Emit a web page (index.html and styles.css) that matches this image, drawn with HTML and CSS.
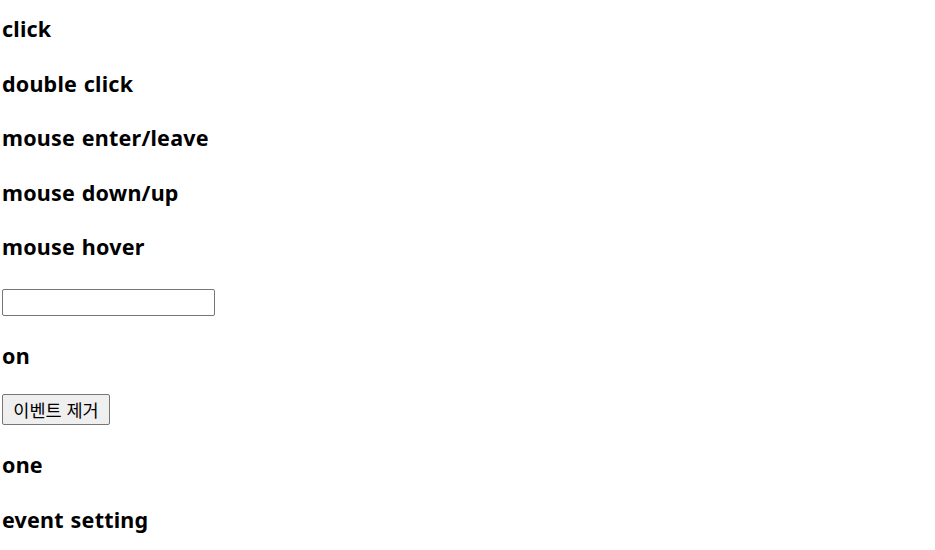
FILE: index.html
```html
<!DOCTYPE html>
<html lang="ko">
<head>
<meta charset="utf-8">
<title>events</title>
<link rel="stylesheet" href="styles.css">
</head>
<body>
<div class="stack">
  <div class="row"><h3 class="label">click</h3></div>
  <div class="row"><h3 class="label">double click</h3></div>
  <div class="row"><h3 class="label">mouse enter/leave</h3></div>
  <div class="row"><h3 class="label">mouse down/up</h3></div>
  <div class="row"><h3 class="label">mouse hover</h3></div>
  <div class="row"><input class="field" type="text"></div>
  <div class="row"><h3 class="label">on</h3></div>
  <div class="row"><button class="btn" type="button">이벤트 제거</button></div>
  <div class="row"><h3 class="label">one</h3></div>
  <div class="row"><h3 class="label">event setting</h3></div>
</div>
</body>
</html>
```
FILE: styles.css
```css
html, body {
  margin: 0;
  padding: 0;
  background: #ffffff;
}
body {
  padding: 3px 2px 0;
  font-family: "Noto Sans", "Noto Sans CJK KR", sans-serif;
  color: #000000;
}
.stack {
  display: flex;
  flex-direction: column;
}
.row {
  height: 54.5px;
  display: flex;
  align-items: center;
}
.label {
  margin: 0;
  padding-bottom: 3px;
  font-size: 21.5px;
  font-weight: 700;
  line-height: 1;
  letter-spacing: 0.2px;
  word-spacing: 1px;
}
.field {
  box-sizing: border-box;
  width: 213px;
  height: 27px;
  margin: 0;
  border: 1px solid #767676;
  border-radius: 2px;
  padding: 1px 2px;
  background: #ffffff;
}
.btn {
  box-sizing: border-box;
  width: 108px;
  height: 31px;
  margin: 0 0 4px;
  padding: 0 6px;
  border: 1px solid #767676;
  border-radius: 2px;
  background: #efefef;
  color: #000000;
  font-family: "Noto Sans CJK KR", sans-serif;
  font-size: 17.5px;
  font-weight: 400;
}
```
